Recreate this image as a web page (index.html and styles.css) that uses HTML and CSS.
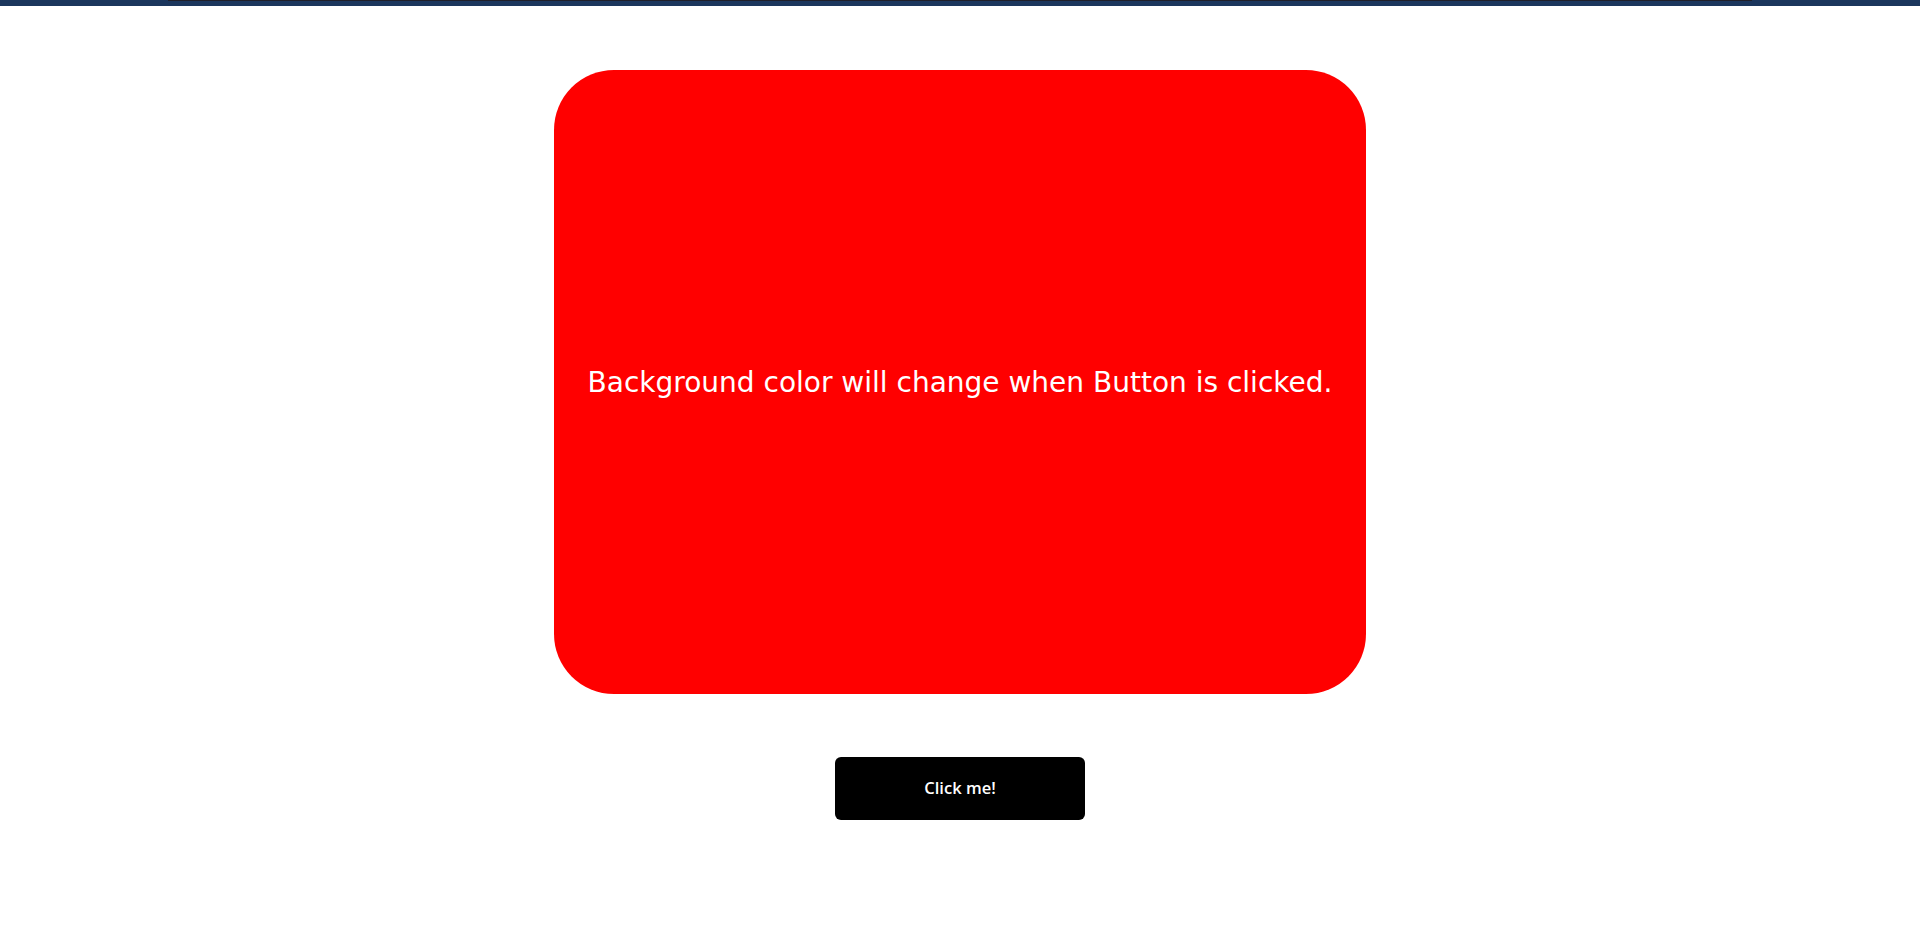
FILE: index.html
```html
<!DOCTYPE html>
<html lang="en">
<head>
<meta charset="utf-8">
<title>Color change</title>
<link rel="stylesheet" href="styles.css">
</head>
<body>
<div class="topbar"><div class="topbar-shade"></div></div>
<main class="page">
  <div class="card">
    <p class="card-text">Background color will change when Button is clicked.</p>
  </div>
  <button class="btn" type="button">Click me!</button>
</main>
</body>
</html>
```
FILE: styles.css
```css
html, body {
  margin: 0;
  padding: 0;
  background: #ffffff;
}
body {
  font-family: "Trebuchet MS", "DejaVu Sans", "Open Sans", sans-serif;
}
.topbar {
  height: 6px;
  background: #1b365d;
  display: flex;
  justify-content: center;
}
.topbar-shade {
  width: 1584px;
  height: 1px;
  background: #1f1f2a;
}
.page {
  display: flex;
  flex-direction: column;
  align-items: center;
  padding-top: 64px;
}
.card {
  width: 812px;
  height: 624px;
  background: #ff0000;
  border-radius: 60px;
  display: flex;
  align-items: center;
  justify-content: center;
}
.card-text {
  margin: 0;
  color: #ffffff;
  font-size: 28px;
  white-space: nowrap;
}
.btn {
  margin-top: 63px;
  width: 250px;
  height: 63px;
  padding: 0 0 2px;
  background: #000000;
  color: #ffffff;
  border: none;
  border-radius: 6px;
  font-family: "Open Sans", "DejaVu Sans", sans-serif;
  font-size: 16.5px;
  font-weight: 600;
  cursor: pointer;
}
```
